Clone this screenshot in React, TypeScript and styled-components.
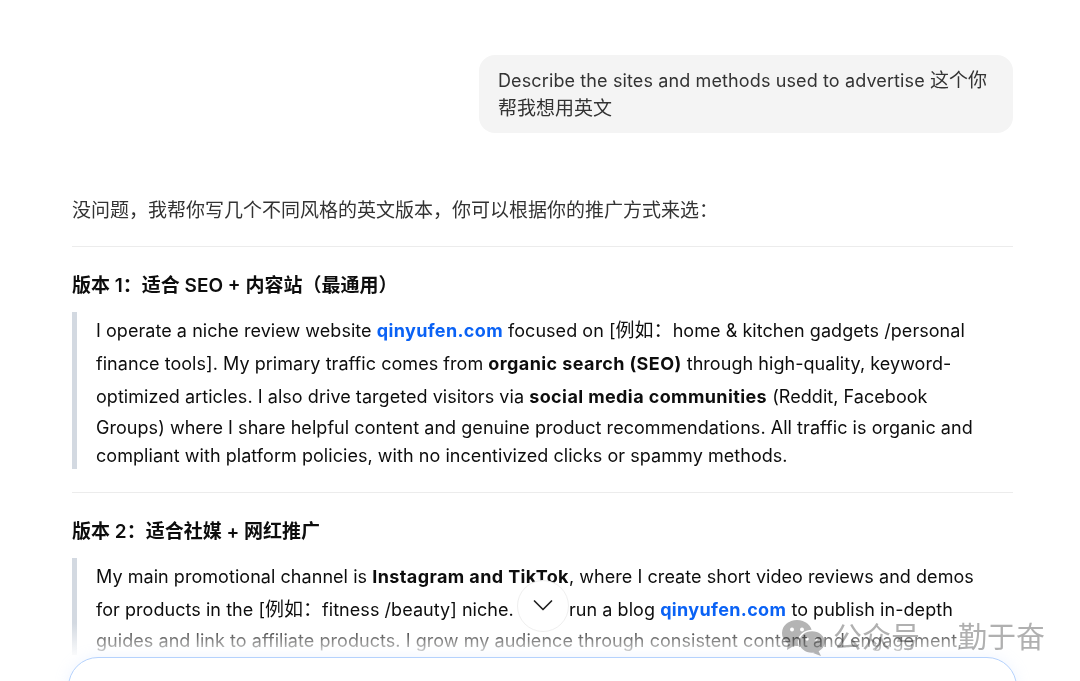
import React from "react";
import styled, { createGlobalStyle } from "styled-components";

const GlobalStyle = createGlobalStyle`
  html, body {
    margin: 0;
    padding: 0;
    background: #fff;
  }
  body {
    font-family: Inter, "Noto Sans CJK SC", sans-serif;
    color: #0d0d0d;
  }
`;

export default function App() {
  return (
    <>
      <GlobalStyle />
      <Page>
        <Thread>
          <UserRow>
            <Bubble>
              Describe the sites and methods used to advertise <Cjk>这个你</Cjk>
              <br />
              <Cjk>帮我想用英文</Cjk>
            </Bubble>
          </UserRow>

          <Intro>没问题，我帮你写几个不同风格的英文版本，你可以根据你的推广方式来选：</Intro>
          <Divider />

          <Heading>版本 1：适合 SEO + 内容站（最通用）</Heading>
          <Quote>
            <Line $h={33}>
              I operate a niche review website <Link>qinyufen.com</Link> focused on [<Cjk>例如：</Cjk>home &amp; kitchen gadgets /personal
            </Line>
            <Line $h={33}>
              finance tools]. My primary traffic comes from <b>organic search (SEO)</b> through high-quality, keyword-
            </Line>
            <Line $h={33}>
              optimized articles. I also drive targeted visitors via <b>social media communities</b> (Reddit, Facebook
            </Line>
            <Line $h={30}>
              Groups) where I share helpful content and genuine product recommendations. All traffic is organic and
            </Line>
            <Line $h={26}>
              compliant with platform policies, with no incentivized clicks or spammy methods.
            </Line>
          </Quote>
          <Divider />

          <Heading>版本 2：适合社媒 + 网红推广</Heading>
          <Quote>
            <Line $h={33}>
              My main promotional channel is <b>Instagram and TikTok</b>, where I create short video reviews and demos
            </Line>
            <Line $h={33}>
              for products in the [<Cjk>例如：</Cjk>fitness /beauty] niche. I also run a blog <Link>qinyufen.com</Link> to publish in-depth
            </Line>
            <Line $h={29}>
              guides and link to affiliate products. I grow my audience through consistent content and engagement,
            </Line>
          </Quote>
        </Thread>

        <Fade />
        <ScrollButton aria-label="Scroll to bottom">
          <svg width="22" height="22" viewBox="0 0 22 22" fill="none" stroke="#222" strokeWidth="1.7" strokeLinecap="round" strokeLinejoin="round">
            <path d="M2.5 6 L11 14.5 L19.5 6" />
          </svg>
        </ScrollButton>
        <Composer />

        <Watermark>
          <svg width="44" height="36" viewBox="0 0 44 36">
            <ellipse cx="15" cy="13" rx="15" ry="13" fill="#b4b4b4" />
            <path d="M6 22 L5 30 L13 25 Z" fill="#b4b4b4" />
            <circle cx="10" cy="9.5" r="2" fill="#fff" />
            <circle cx="20" cy="9.5" r="2" fill="#fff" />
            <ellipse cx="30" cy="22" rx="13.5" ry="11.5" fill="#b4b4b4" stroke="#fff" strokeWidth="1.5" />
            <path d="M36 30 L39 36 L31 33 Z" fill="#b4b4b4" />
            <circle cx="25" cy="19" r="1.7" fill="#fff" />
            <circle cx="34" cy="19" r="1.7" fill="#fff" />
          </svg>
          <WatermarkText>公众号</WatermarkText>
          <WatermarkText>勤于奋</WatermarkText>
        </Watermark>
      </Page>
    </>
  );
}

const Page = styled.div`
  position: relative;
  width: 1080px;
  height: 681px;
  overflow: hidden;
  background: #fff;
`;

const Thread = styled.main`
  display: flex;
  flex-direction: column;
  padding: 55px 67px 0 72px;
`;

const UserRow = styled.div`
  display: flex;
  justify-content: flex-end;
  margin-bottom: 62px;
`;

const Bubble = styled.div`
  box-sizing: border-box;
  width: 534px;
  height: 78px;
  padding: 12px 19px;
  border-radius: 16px;
  background: #f4f4f4;
  font-size: 18px;
  line-height: 28px;
  letter-spacing: 0.12px;
  color: #333;
`;

const Cjk = styled.span`
  font-size: 19px;
  letter-spacing: 0;
`;

const Intro = styled.p`
  margin: 0 0 19px;
  font-size: 19px;
  line-height: 32px;
  color: #333;
`;

const Divider = styled.hr`
  width: 100%;
  height: 1px;
  margin: 0;
  border: 0;
  background: #ececec;
`;

const Heading = styled.h3`
  margin: 25px 0 12px;
  font-size: 19px;
  line-height: 28px;
  font-weight: 600;
  color: #0d0d0d;
`;

const Quote = styled.blockquote`
  margin: 0 0 23px;
  padding: 2px 0 0 19px;
  border-left: 5px solid #d3d9e1;
  font-size: 18px;
  letter-spacing: 0.05px;
  color: #0d0d0d;

  b {
    font-weight: 700;
    letter-spacing: 0.4px;
  }
`;

const Line = styled.div<{ $h: number }>`
  height: ${(p) => p.$h}px;
  line-height: ${(p) => p.$h}px;
  white-space: nowrap;
`;

const Link = styled.a`
  color: #0a62f5;
  font-weight: 700;
  letter-spacing: 0.35px;
`;

const Fade = styled.div`
  position: absolute;
  left: 0;
  right: 0;
  bottom: 0;
  height: 58px;
  background: linear-gradient(rgba(255, 255, 255, 0), #fff 62%);
`;

const ScrollButton = styled.button`
  position: absolute;
  left: 517px;
  top: 580px;
  width: 52px;
  height: 52px;
  display: flex;
  align-items: center;
  justify-content: center;
  padding: 0;
  border: 1px solid #efefef;
  border-radius: 50%;
  background: #fff;
`;

const Composer = styled.div`
  position: absolute;
  left: 68px;
  top: 657px;
  width: 949px;
  height: 100px;
  box-sizing: border-box;
  border: 1px solid #b5d2fd;
  border-radius: 30px;
  background: #fff;
  box-shadow: 0 0 14px rgba(190, 215, 255, 0.25);
`;

const Watermark = styled.div`
  position: absolute;
  left: 782px;
  top: 620px;
  display: flex;
  align-items: center;
  gap: 7px;
  mix-blend-mode: multiply;

  span + span {
    margin-left: 31px;
  }
`;

const WatermarkText = styled.span`
  font-size: 29px;
  line-height: 36px;
  white-space: nowrap;
  color: #b0b0b0;
`;
